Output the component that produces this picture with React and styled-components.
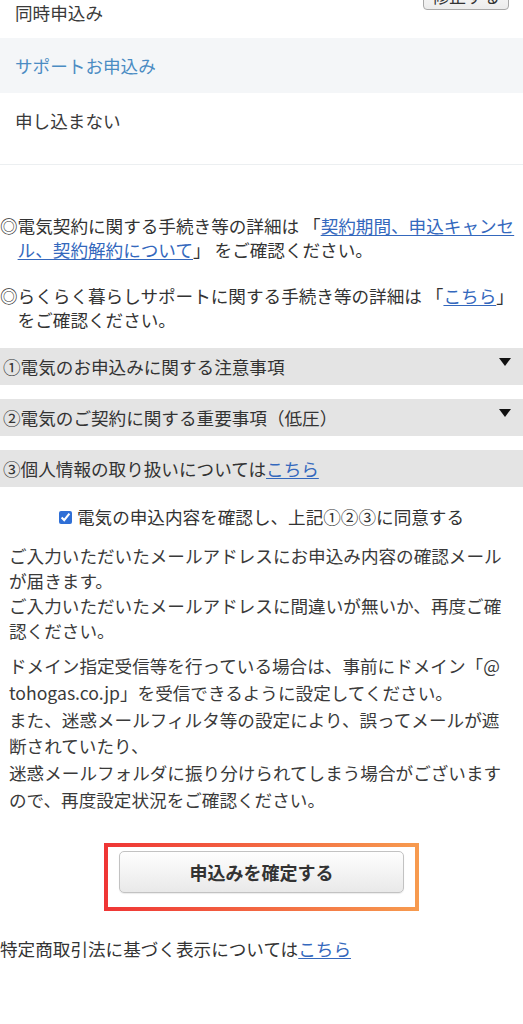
import React from "react";
import styled, { createGlobalStyle } from "styled-components";

const GlobalStyle = createGlobalStyle`
  html, body {
    margin: 0;
    padding: 0;
    background: #fff;
  }
  body {
    font-family: "Noto Sans CJK JP", "Noto Sans", sans-serif;
    font-size: 17.6px;
    color: #333;
  }
`;

// page is scrolled a little, so the first row sits partly above the top edge
const Page = styled.div`
  width: 523px;
  margin-top: -28px;
  overflow: hidden;
`;

const ValueRow = styled.div`
  display: flex;
  justify-content: space-between;
  align-items: flex-end;
  padding: 8px 14px 13px 15px;
  line-height: 25px;
  color: #3a3a3a;
`;

const EditButton = styled.button`
  height: 30px;
  margin-bottom: 15px;
  padding: 0 8px;
  font-family: inherit;
  font-size: 17px;
  color: #333;
  background: linear-gradient(#fff, #ececec);
  border: 1px solid #a9a9a9;
  border-radius: 4px;
`;

const LabelBand = styled.div`
  height: 55px;
  display: flex;
  align-items: center;
  padding: 0 15px;
  background: #f4f6f8;
  color: #4b8cc3;
`;

const PlainValue = styled.div`
  padding: 15px 15px 31px;
  line-height: 25px;
  color: #3a3a3a;
  border-bottom: 1px solid #eceff1;
`;

const Notes = styled.div`
  padding-top: 49px;
`;

const Note = styled.p`
  margin: 0 0 22px;
  padding-left: 1em;
  text-indent: -1em;
  line-height: 24px;
  &:last-child {
    margin-bottom: 0;
  }
`;

const Link = styled.a`
  color: #3468bd;
  text-decoration: underline;
  text-underline-offset: 2px;
`;

const Accordions = styled.div`
  display: flex;
  flex-direction: column;
  gap: 14px;
  margin-top: 16px;
`;

const Bar = styled.div`
  height: 37px;
  display: flex;
  align-items: center;
  justify-content: space-between;
  padding-left: 3px;
  background: #e4e4e4;
  color: #333;
`;

const Arrow = styled.span`
  align-self: flex-start;
  margin: 10px 12px 0 0;
  width: 0;
  height: 0;
  border-left: 6px solid transparent;
  border-right: 6px solid transparent;
  border-top: 8px solid #111;
`;

const Agree = styled.label`
  display: flex;
  justify-content: center;
  align-items: center;
  margin-top: 18px;
  line-height: 24px;
  color: #333;
`;

const Check = styled.input`
  width: 13px;
  height: 13px;
  margin: 0 5px 0 0;
  accent-color: #2f6fd6;
`;

const Notice = styled.div`
  padding: 0 9px;
  color: #3a3a3a;
`;

const NoticeText = styled.p`
  margin: ${(p) => p.$top}px 0 0;
  line-height: ${(p) => p.$lh}px;
`;

const Frame = styled.div`
  width: 315px;
  margin: 29px auto 0;
  padding: 4px;
  box-sizing: border-box;
  background: linear-gradient(90deg, #ef3535, #f79b4f);
`;

const FrameInner = styled.div`
  padding: 4px 11px 14px;
  background: #fff;
`;

const SubmitButton = styled.button`
  display: block;
  width: 285px;
  height: 42px;
  font-family: inherit;
  font-size: 18px;
  font-weight: bold;
  color: #333;
  background: linear-gradient(#fefefe, #e9e9e9);
  border: 1px solid #c2c2c2;
  border-radius: 5px;
  box-shadow: 0 1px 1px rgba(0, 0, 0, 0.08);
`;

const Footer = styled.div`
  margin-top: 25px;
  line-height: 25px;
  color: #333;
`;

const App = () => {
  return (
    <>
      <GlobalStyle />
      <Page>
        <ValueRow>
          <span>同時申込み</span>
          <EditButton>修正する</EditButton>
        </ValueRow>
        <LabelBand>サポートお申込み</LabelBand>
        <PlainValue>申し込まない</PlainValue>

        <Notes>
          <Note>
            ◎電気契約に関する手続き等の詳細は 「<Link href="#">契約期間、申込キャンセル、契約解約について</Link>」 をご確認ください。
          </Note>
          <Note>
            ◎らくらく暮らしサポートに関する手続き等の詳細は 「<Link href="#">こちら</Link>」 をご確認ください。
          </Note>
        </Notes>

        <Accordions>
          <Bar>
            ①電気のお申込みに関する注意事項
            <Arrow />
          </Bar>
          <Bar>
            ②電気のご契約に関する重要事項（低圧）
            <Arrow />
          </Bar>
          <Bar>
            <span>
              ③個人情報の取り扱いについては<Link href="#">こちら</Link>
            </span>
          </Bar>
        </Accordions>

        <Agree>
          <Check type="checkbox" defaultChecked />
          電気の申込内容を確認し、上記①②③に同意する
        </Agree>

        <Notice>
          <NoticeText $top={14} $lh={25}>
            ご入力いただいたメールアドレスにお申込み内容の確認メールが届きます。
            <br />
            ご入力いただいたメールアドレスに間違いが無いか、再度ご確認ください。
          </NoticeText>
          <NoticeText $top={10} $lh={26.8}>
            ドメイン指定受信等を行っている場合は、事前にドメイン「@<wbr />tohogas.co.jp」を受信できるように設定してください。
            <br />
            また、迷惑メールフィルタ等の設定により、誤ってメールが遮断されていたり、
            <br />
            迷惑メールフォルダに振り分けられてしまう場合がございますので、再度設定状況をご確認ください。
          </NoticeText>
        </Notice>

        <Frame>
          <FrameInner>
            <SubmitButton>申込みを確定する</SubmitButton>
          </FrameInner>
        </Frame>

        <Footer>
          特定商取引法に基づく表示については<Link href="#">こちら</Link>
        </Footer>
      </Page>
    </>
  );
};

export default App;
